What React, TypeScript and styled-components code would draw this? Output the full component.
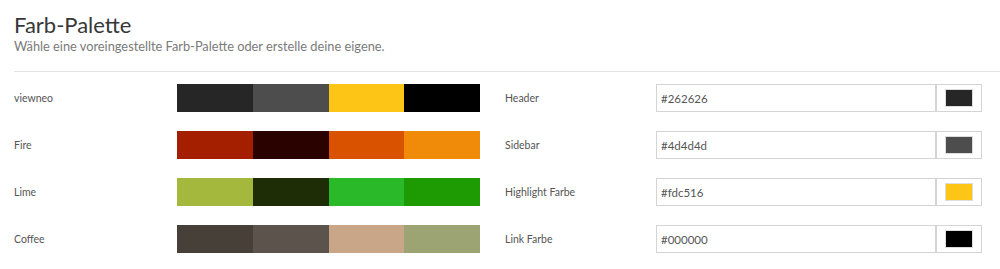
import styled, { createGlobalStyle } from "styled-components";

type TPalette = {
  name: string;
  colors: string[];
};

type TField = {
  label: string;
  value: string;
};

const palettes: TPalette[] = [
  { name: "viewneo", colors: ["#262626", "#4d4d4d", "#fdc516", "#000000"] },
  { name: "Fire", colors: ["#a31f00", "#2a0300", "#d95200", "#f08b09"] },
  { name: "Lime", colors: ["#a4b83e", "#1f2d06", "#29b929", "#1e9a03"] },
  { name: "Coffee", colors: ["#464039", "#5c534c", "#c9a688", "#9da473"] },
];

const fields: TField[] = [
  { label: "Header", value: "#262626" },
  { label: "Sidebar", value: "#4d4d4d" },
  { label: "Highlight Farbe", value: "#fdc516" },
  { label: "Link Farbe", value: "#000000" },
];

const App = () => {
  return (
    <>
      <GlobalStyle />
      <Page>
        <Title>Farb-Palette</Title>
        <Subtitle>Wähle eine voreingestellte Farb-Palette oder erstelle deine eigene.</Subtitle>
        <Divider />
        <Columns>
          <Column>
            {palettes.map((palette) => (
              <Row key={palette.name}>
                <PaletteLabel>{palette.name}</PaletteLabel>
                <Bar>
                  {palette.colors.map((color, i) => (
                    <Segment key={i} $color={color} />
                  ))}
                </Bar>
              </Row>
            ))}
          </Column>
          <Column>
            {fields.map((field) => (
              <Row key={field.label}>
                <FieldLabel>{field.label}</FieldLabel>
                <InputGroup>
                  <ColorInput type="text" defaultValue={field.value} />
                  <SwatchBox>
                    <Swatch $color={field.value} />
                  </SwatchBox>
                </InputGroup>
              </Row>
            ))}
          </Column>
        </Columns>
      </Page>
    </>
  );
};

const GlobalStyle = createGlobalStyle`
  body {
    margin: 0;
    background: #fff;
    font-family: Lato, "Open Sans", sans-serif;
    color: #333;
  }
`;

const Page = styled.div`
  padding: 12px 0 0 14px;
`;

const Title = styled.h1`
  margin: 0;
  font-size: 22px;
  line-height: 26px;
  font-weight: 400;
  color: #383838;
`;

const Subtitle = styled.p`
  margin: 0;
  font-size: 12.8px;
  line-height: 16px;
  color: #7a7a7a;
`;

const Divider = styled.hr`
  margin: 17px 0 0;
  border: 0;
  border-top: 1px solid #e3e3e3;
`;

const Columns = styled.div`
  display: flex;
  gap: 25px;
  margin-top: 12px;
`;

const Column = styled.div`
  display: flex;
  flex-direction: column;
  gap: 19px;
`;

const Row = styled.div`
  display: flex;
  align-items: center;
  height: 28px;
`;

const PaletteLabel = styled.div`
  width: 163px;
  font-size: 10.5px;
  color: #555;
`;

const Bar = styled.div`
  display: flex;
  width: 303px;
  height: 28px;
`;

const Segment = styled.div<{ $color: string }>`
  flex: 1;
  background: ${({ $color }) => $color};
`;

const FieldLabel = styled.div`
  width: 151px;
  font-size: 10.5px;
  color: #555;
`;

const InputGroup = styled.div`
  display: flex;
  height: 28px;
`;

const ColorInput = styled.input`
  box-sizing: border-box;
  width: 279px;
  height: 28px;
  padding: 0 4px;
  border: 1px solid #d4d4d4;
  border-right: 0;
  font-family: Lato, "Open Sans", sans-serif;
  font-size: 11.5px;
  color: #555;
  outline: none;
`;

const SwatchBox = styled.div`
  box-sizing: border-box;
  display: flex;
  align-items: center;
  justify-content: center;
  width: 47px;
  height: 28px;
  border: 1px solid #d4d4d4;
  border-left: 2px solid #d4d4d4;
`;

const Swatch = styled.div<{ $color: string }>`
  width: 26px;
  height: 16px;
  background: ${({ $color }) => $color};
  border: 1px solid #ddd;
`;

export default App;
